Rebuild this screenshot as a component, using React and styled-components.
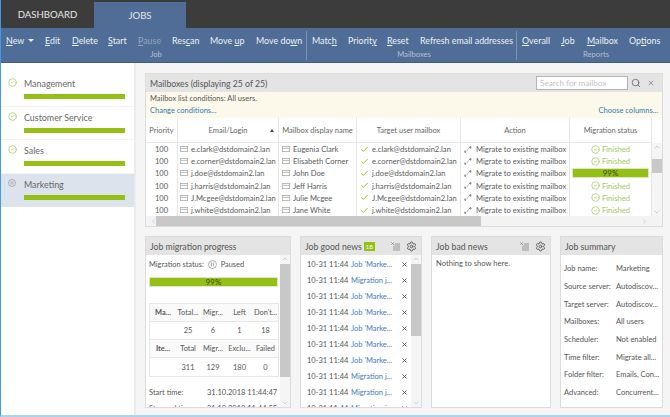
import React from "react";
import styled, { createGlobalStyle } from "styled-components";
import { Search, X, Settings, Check, CircleCheck, ChevronUp, ChevronDown, ChevronLeft, ChevronRight } from "lucide-react";

const Global = createGlobalStyle`
  html, body { margin: 0; padding: 0; background: #f5f5f5; }
  body { font-family: "Lato", "Open Sans", "Liberation Sans", sans-serif; font-size: 7.6px; color: #555; }
  #root { width: 670px; height: 417px; overflow: hidden; }
  * { box-sizing: border-box; }
`;
const Page = styled.div`
  width: 670px; height: 417px; display: flex; flex-direction: column;
  border-left: 1px solid #3f9be8; border-bottom: 2px solid #a9d3ee; overflow: hidden;
`;
const TopBar = styled.div`
  height: 28px; flex: none; background: #3c3c3c; display: flex; align-items: flex-end;
`;
const Tab = styled.div`
  width: ${p => p.$w}px; height: ${p => (p.$active ? 26 : 28)}px; display: flex; align-items: center; justify-content: center;
  background: ${p => (p.$active ? "#4f6d96" : "transparent")}; color: #e8e8e8; font-size: 9.6px;
`;
const Ribbon = styled.div`
  height: 35px; flex: none; background: #4f6d96; border-bottom: 1px solid #3f5d86; display: flex; padding-top: 3px;
`;
const Group = styled.div`
  width: ${p => p.$w}px; height: 29px; padding-left: ${p => p.$pl}px; display: flex; flex-direction: column; flex: none;
  border-right: ${p => (p.$sep ? "1px solid #7d93b2" : "none")};
`;
const GroupItems = styled.div`
  display: flex; height: 18px; align-items: center; white-space: nowrap;
`;
const RibbonBtn = styled.span`
  color: ${p => (p.$off ? "#93a5be" : "#eef2f7")}; font-size: 8.9px; width: ${p => p.$w}px; flex: none;
  u { text-underline-offset: 1px; }
`;
const Caret = styled.span`
  display: inline-block; margin-left: 4px; vertical-align: 1.5px; border: 3px solid transparent; border-top: 3px solid #eef2f7; border-bottom: 0;
`;
const GroupLabel = styled.div`
  text-align: center; font-size: 7.6px; color: #b3c1d4; line-height: 11px;
`;
const Main = styled.div`
  flex: 1; display: flex; min-height: 0;
`;
const Sidebar = styled.div`
  width: 135px; flex: none; background: #fff; border-right: 2px solid #ececec; padding-top: 10px;
`;
const JobItem = styled.div`
  height: 33.6px; padding: 4px 0 0 7px; display: grid; grid-template-columns: 16px 101px; align-content: start;
  background: ${p => (p.$active ? "#dce3ec" : "transparent")};
  border-bottom: ${p => (p.$active ? "none" : "1px solid #f3f3f3")};
`;
const JobName = styled.div`
  font-size: 8.9px; color: #666; line-height: 13px; height: 17px;
`;
const JobBar = styled.div`
  grid-column: 2; height: 5px; background: #94bf14;
`;
const IconCell = styled.div`
  display: flex; padding-top: 1px;
`;
const Content = styled.div`
  flex: 1; padding: 10px 7px 0 9px; display: flex; flex-direction: column; gap: 9px; min-width: 0;
`;
const Panel = styled.div`
  background: #fff; border: 1px solid #dcdcdc; display: flex; flex-direction: column; overflow: hidden; min-width: 0;
  width: ${p => (p.$w ? p.$w + "px" : "auto")}; height: ${p => p.$h}px; flex: none;
`;
const PanelHead = styled.div`
  height: 18px; flex: none; background: #e4e4e4; display: flex; align-items: center; padding: 0 4px; font-size: 8.7px; color: #555; white-space: nowrap;
`;
const Spacer = styled.div` flex: 1; `;
const SearchBox = styled.div`
  width: 92px; height: 14px; background: #fff; border: 1px solid #b5b5b5; color: #c4c4c4; font-size: 8.2px; padding-left: 3px; line-height: 12px; margin-right: 3px;
`;
const Conditions = styled.div`
  height: 26px; flex: none; background: #fdf9ea; padding: 2px 4px 0; display: grid; grid-template-columns: 1fr auto; font-size: 7.5px; line-height: 10.5px; color: #555;
  a { color: #2d7ab8; }
`;
const TableWrap = styled.div`
  display: flex; flex-direction: column; flex: 1; min-height: 0;
`;
const GridRow = styled.div`
  display: grid; grid-template-columns: 32px 101px 78px 104px 109px 82px 10px; height: ${p => p.$h}px; flex: none; align-items: center; font-size: 7.6px;
`;
const HeadCell = styled.div`
  height: 100%; display: flex; align-items: center; justify-content: center; border-right: 1px solid #e6e6e6; border-bottom: 1px solid #e6e6e6; color: #666; position: relative; white-space: nowrap; font-size: 7.5px;
`;
const Cell = styled.div`
  height: 100%; display: flex; align-items: center; gap: ${p => p.$gap || 0}px; justify-content: ${p => (p.$center ? "center" : "flex-start")};
  padding-left: ${p => p.$pl || 0}px; border-right: 1px solid #e6e6e6; color: #5a5a5a; white-space: nowrap; overflow: hidden;
  svg { flex: none; }
`;
const SortMark = styled.span`
  position: absolute; right: 4px; top: 11px; border: 2.5px solid transparent; border-bottom: 3px solid #444; border-top: 0;
`;
const Rows = styled.div` position: relative; `;
const VScroll = styled.div`
  position: absolute; right: 0; top: 0; bottom: 0; width: 10px; background: #f5f5f5; display: flex; flex-direction: column; align-items: center;
`;
const Thumb = styled.div`
  position: absolute; left: 0; right: 0; top: ${p => p.$top}px; height: ${p => p.$h}px; background: #c8c8c8;
`;
const ArrowTop = styled.div` position: absolute; top: 0; color: #bbb; display: flex; `;
const ArrowBottom = styled.div` position: absolute; bottom: 0; color: #bbb; display: flex; `;
const HScroll = styled.div`
  height: 10px; flex: none; background: #f3f3f3; position: relative; display: flex; align-items: center; justify-content: space-between; color: #bbb; padding: 0 4px;
`;
const HThumb = styled.div`
  position: absolute; left: 10px; top: 0; bottom: 0; width: 325px; background: #c8c8c8;
`;
const Progress = styled.div`
  height: ${p => p.$h}px; background: #94bf14; color: #3c4a10; display: flex; align-items: center; justify-content: center; font-size: 7.8px; width: ${p => p.$w};
  border: 1px solid #dfe8c4;
`;
const Finished = styled.span`
  color: #a3c95a; display: flex; align-items: center; gap: 2px;
`;
const BottomRow = styled.div`
  display: flex; gap: 9px; flex: none;
`;
const PanelBody = styled.div`
  flex: 1; display: flex; min-height: 0; position: relative;
`;
const ScrollContent = styled.div`
  flex: 1; min-width: 0; overflow: hidden; padding: ${p => p.$pad};
`;
const StatusLine = styled.div`
  display: flex; align-items: center; gap: 4px; font-size: 7.4px; color: #555; height: 12px; margin-bottom: 7px;
`;
const Stats = styled.div`
  width: 130px; margin-top: 16px; border: 1px solid #e6e6e6; display: grid; grid-template-columns: 26px 24px 26px 27px 1fr; font-size: 7.4px; color: #555;
`;
const StatCell = styled.div`
  height: 18px; display: flex; align-items: center; justify-content: center; white-space: nowrap; overflow: hidden;
  border-bottom: ${p => (p.$last ? "none" : "1px solid #e6e6e6")};
  background: ${p => (p.$head ? "#fafafa" : "#fff")};
  font-weight: ${p => (p.$bold ? 700 : 400)};
`;
const TimeRow = styled.div`
  display: grid; grid-template-columns: 58px auto; font-size: 7.5px; color: #555; height: 16px; align-items: center; white-space: nowrap;
  margin-top: ${p => p.$mt || 0}px;
`;
const NewsRow = styled.div`
  height: 16px; display: grid; grid-template-columns: 44px 50px auto; padding-left: 6px; align-items: center; font-size: 7.5px; color: #555; white-space: nowrap;
  a { color: #3e7cc0; }
`;
const Badge = styled.span`
  background: #94bf14; color: #fff; font-size: 6.5px; width: 11px; height: 9px; display: inline-flex; align-items: center; justify-content: center; margin-left: 2px;
`;
const HeadIcons = styled.div`
  display: flex; gap: 6px; align-items: center; color: #555; margin-right: 0;
`;
const EmptyText = styled.div`
  padding: 3px 4px; font-size: 7.6px; color: #555;
`;
const SummaryList = styled.div`
  padding: 5px 3px; display: grid; grid-template-columns: 52px 1fr; grid-auto-rows: 17.7px; align-items: center; font-size: 7.5px; color: #555; white-space: nowrap;
`;

const XlsIcon = () => (
  <svg width="9" height="9" viewBox="0 0 9 9"><rect x="2" y="1" width="7" height="8" fill="#bdbdbd" /><rect x="0" y="0" width="3.6" height="3.6" fill="#f2f2f2" /><path d="M.3.3l2.6 2.6M2.9.3L.3 2.9" stroke="#777" strokeWidth=".8" /></svg>
);
const PauseCircle = ({ size = 9, color = "#999" }) => (
  <svg width={size} height={size} viewBox="0 0 10 10" fill="none" stroke={color} strokeWidth=".9"><circle cx="5" cy="5" r="4.4" /><path d="M3.9 3v4M6.1 3v4" /></svg>
);
const ActionIcon = () => (
  <svg width="8" height="7" viewBox="0 0 8 7" fill="none" stroke="#666" strokeWidth=".9"><path d="M0 5.8h1.6" /><path d="M1 4.6l1 1.2-1 .9" strokeWidth=".7" /><path d="M3 4.6l2-2.4" strokeDasharray="1 .6" /><path d="M5 1.3h1.8" /><path d="M6 .2l1.4 1.1L6 2.4" strokeWidth=".7" /></svg>
);
const Envelope = () => (
  <svg width="8" height="6" viewBox="0 0 8 6" fill="none" stroke="#aaa" strokeWidth=".8"><rect x=".4" y=".4" width="7.2" height="5.2" /><path d="M1 2.4h6" /></svg>
);

const jobs = ["Management", "Customer Service", "Sales", "Marketing"];
const users = [
  ["e.clark@dstdomain2.lan", "Eugenia Clark"],
  ["e.corner@dstdomain2.lan", "Elisabeth Corner"],
  ["j.doe@dstdomain2.lan", "John Doe"],
  ["j.harris@dstdomain2.lan", "Jeff Harris"],
  ["J.Mcgee@dstdomain2.lan", "Julie Mcgee"],
  ["j.white@dstdomain2.lan", "Jane White"],
];
const news = ["Job 'Marke...", "Migration j...", "Job 'Marke...", "Job 'Marke...", "Job 'Marke...", "Job 'Marke...", "Job 'Marke...", "Migration j...", "Migration j...", "Migration j..."];
const summary = [
  ["Job name:", "Marketing"], ["Source server:", "Autodiscov..."], ["Target server:", "Autodiscov..."], ["Mailboxes:", "All users"],
  ["Scheduler:", "Not enabled"], ["Time filter:", "Migrate all..."], ["Folder filter:", "Emails, Con..."], ["Advanced:", "Concurrent..."],
];
const stats = [
  ["Ma...", "Total...", "Migr...", "Left", "Don't..."],
  ["", "25", "6", "1", "18"],
  ["Ite...", "Total", "Migr...", "Exclu...", "Failed"],
  ["", "311", "129", "180", "0"],
];

const Scroller = ({ top, h }) => (
  <VScroll>
    <ArrowTop><ChevronUp size={8} /></ArrowTop>
    <Thumb $top={top} $h={h} />
    <ArrowBottom><ChevronDown size={8} /></ArrowBottom>
  </VScroll>
);

export default function App() {
  return (
    <Page>
      <Global />
      <TopBar>
        <Tab $w={93}>DASHBOARD</Tab>
        <Tab $w={92} $active>JOBS</Tab>
      </TopBar>
      <Ribbon>
        <Group $w={306} $pl={5} $sep>
          <GroupItems>
            <RibbonBtn $w={39}><u>N</u>ew<Caret /></RibbonBtn>
            <RibbonBtn $w={27}><u>E</u>dit</RibbonBtn>
            <RibbonBtn $w={36}><u>D</u>elete</RibbonBtn>
            <RibbonBtn $w={30}><u>S</u>tart</RibbonBtn>
            <RibbonBtn $w={34} $off><u>P</u>ause</RibbonBtn>
            <RibbonBtn $w={38}>Res<u>c</u>an</RibbonBtn>
            <RibbonBtn $w={46}>Move <u>u</u>p</RibbonBtn>
            <RibbonBtn>Move do<u>w</u>n</RibbonBtn>
          </GroupItems>
          <GroupLabel>Job</GroupLabel>
        </Group>
        <Group $w={210} $pl={5} $sep>
          <GroupItems>
            <RibbonBtn $w={36}>Matc<u>h</u></RibbonBtn>
            <RibbonBtn $w={39}>Priorit<u>y</u></RibbonBtn>
            <RibbonBtn $w={33}><u>R</u>eset</RibbonBtn>
            <RibbonBtn>Refresh email addresses</RibbonBtn>
          </GroupItems>
          <GroupLabel>Mailboxes</GroupLabel>
        </Group>
        <Group $w={153} $pl={5}>
          <GroupItems>
            <RibbonBtn $w={39}><u>O</u>verall</RibbonBtn>
            <RibbonBtn $w={26}><u>J</u>ob</RibbonBtn>
            <RibbonBtn $w={42}><u>M</u>ailbox</RibbonBtn>
            <RibbonBtn>Op<u>t</u>ions</RibbonBtn>
          </GroupItems>
          <GroupLabel>Reports</GroupLabel>
        </Group>
      </Ribbon>
      <Main>
        <Sidebar>
          {jobs.map((j, i) => (
            <JobItem key={j} $active={i === 3}>
              <IconCell>{i === 3 ? <PauseCircle size={8} color="#9a9a9a" /> : <CircleCheck size={9} color="#a3c95a" />}</IconCell>
              <JobName>{j}</JobName>
              <JobBar />
            </JobItem>
          ))}
        </Sidebar>
        <Content>
          <Panel $h={154}>
            <PanelHead>
              Mailboxes (displaying 25 of 25)
              <Spacer />
              <SearchBox>Search for mailbox</SearchBox>
              <Search size={10} color="#666" />
              <X size={8} color="#999" style={{ margin: "0 3px 0 6px" }} strokeWidth={3} />
            </PanelHead>
            <Conditions>
              <span>Mailbox list conditions: All users.</span><span />
              <a>Change conditions...</a><a>Choose columns...</a>
            </Conditions>
            <TableWrap>
              <GridRow $h={25}>
                <HeadCell>Priority</HeadCell>
                <HeadCell>Email/Login<SortMark /></HeadCell>
                <HeadCell>Mailbox display name</HeadCell>
                <HeadCell>Target user mailbox</HeadCell>
                <HeadCell>Action</HeadCell>
                <HeadCell>Migration status</HeadCell>
                <span />
              </GridRow>
              <Rows>
                {users.map(([mail, name], i) => (
                  <GridRow $h={12.2} key={mail}>
                    <Cell $center>100</Cell>
                    <Cell $pl={2} $gap={3}><Envelope />{mail}</Cell>
                    <Cell $pl={3} $gap={3}><Envelope />{name}</Cell>
                    <Cell $pl={3} $gap={3}><Check size={9} color="#94bf14" strokeWidth={2.4} />{mail}</Cell>
                    <Cell $pl={3} $gap={4}><ActionIcon />Migrate to existing mailbox</Cell>
                    <Cell $center>
                      {i === 2 ? <Progress $h={10} $w="77px">99%</Progress> : <Finished><CircleCheck size={9} color="#a3c95a" />Finished</Finished>}
                    </Cell>
                    <span />
                  </GridRow>
                ))}
                <Scroller top={16} h={14} />
              </Rows>
              <HScroll>
                <HThumb />
                <ChevronLeft size={7} />
                <ChevronRight size={7} style={{ marginRight: 10 }} />
              </HScroll>
            </TableWrap>
          </Panel>
          <BottomRow>
            <Panel $w={146} $h={172}>
              <PanelHead>Job migration progress</PanelHead>
              <PanelBody>
                <ScrollContent $pad="3px 12px 0 3px">
                  <StatusLine>Migration status:<PauseCircle />Paused</StatusLine>
                  <Progress $h={10} $w="129px">99%</Progress>
                  <Stats>
                    {stats.flatMap((r, ri) => r.map((c, ci) => (
                      <StatCell key={ri + "-" + ci} $head={ri % 2 === 0} $bold={ci === 0} $last={ri === 3}>{c}</StatCell>
                    )))}
                  </Stats>
                  <TimeRow $mt={7}><span>Start time:</span><span>31.10.2018 11:44:47</span></TimeRow>
                  <TimeRow><span>Stopped time:</span><span>31.10.2018 11:44:55</span></TimeRow>
                </ScrollContent>
                <Scroller top={9} h={113} />
              </PanelBody>
            </Panel>
            <Panel $w={122} $h={172}>
              <PanelHead>
                Job good news<Badge>18</Badge>
                <Spacer />
                <HeadIcons><XlsIcon /><Settings size={11} /></HeadIcons>
              </PanelHead>
              <PanelBody>
                <ScrollContent $pad="1px 0 0 0">
                  {news.map((n, i) => (
                    <NewsRow key={i}>
                      <span>10-31 11:44</span><a>{n}</a>
                      <X size={7} color="#555" strokeWidth={3} />
                    </NewsRow>
                  ))}
                </ScrollContent>
                <Scroller top={9} h={72} />
              </PanelBody>
            </Panel>
            <Panel $w={120} $h={172}>
              <PanelHead>
                Job bad news
                <Spacer />
                <HeadIcons><XlsIcon /><Settings size={11} /></HeadIcons>
              </PanelHead>
              <EmptyText>Nothing to show here.</EmptyText>
            </Panel>
            <Panel $w={103} $h={172}>
              <PanelHead>Job summary</PanelHead>
              <SummaryList>
                {summary.map(([k, v]) => (
                  <React.Fragment key={k}><span>{k}</span><span>{v}</span></React.Fragment>
                ))}
              </SummaryList>
            </Panel>
          </BottomRow>
        </Content>
      </Main>
    </Page>
  );
}
